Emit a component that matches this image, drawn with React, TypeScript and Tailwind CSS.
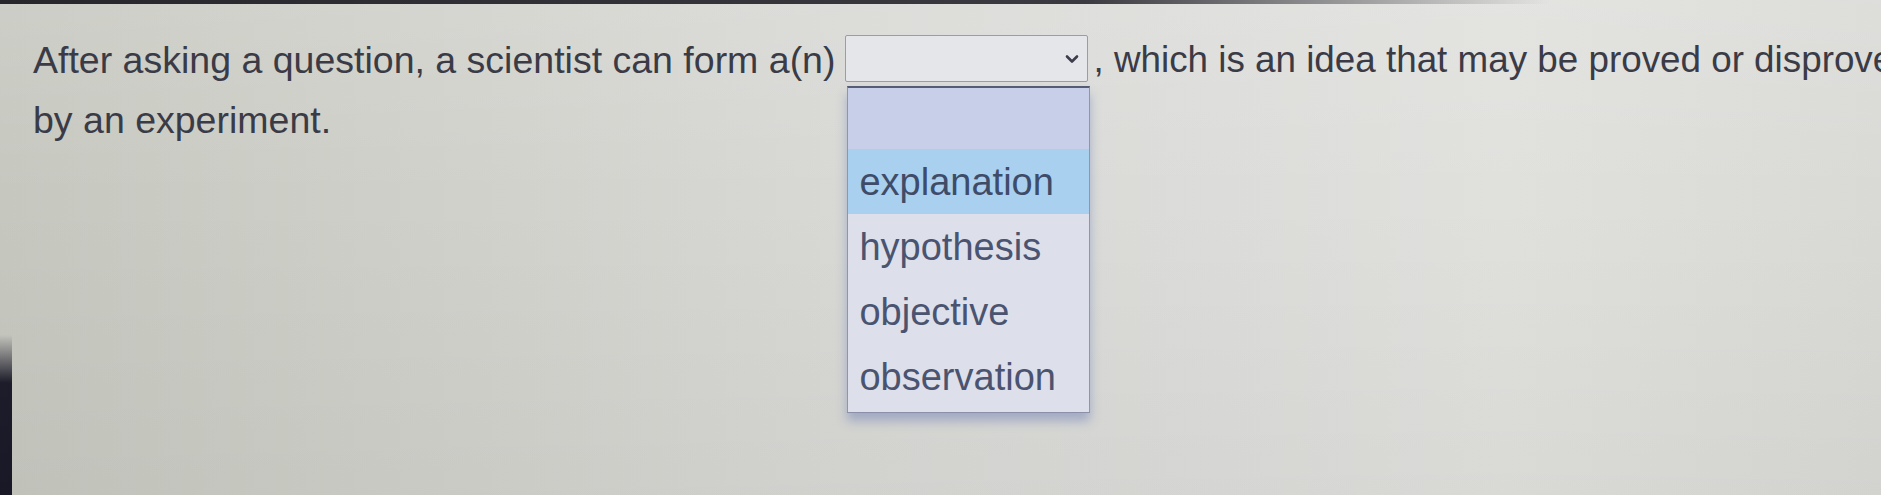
import { useState } from 'react';

const options = ['', 'explanation', 'hypothesis', 'objective', 'observation'];

function Chevron() {
    return (
        <svg width="14" height="10" viewBox="0 0 14 10" fill="none">
            <path d="M2 2.5 L7 7.5 L12 2.5" stroke="#3b3d4c" strokeWidth="2.6" strokeLinecap="round" strokeLinejoin="round" />
        </svg>
    );
}

function BlankSelect({ open, active }: { open: boolean; active: string }) {
    return (
        <div className="relative ml-[10px] mr-[5px] mt-[5px] shrink-0">
            <div className="flex h-[47px] w-[243px] items-center justify-end rounded-[2px] border border-[#9a9ca8] bg-[#e5e6ea] pr-[8px]">
                <Chevron />
            </div>

            {open && (
                <div className="absolute left-[2px] top-[51px] z-10 w-[243px] border-x border-b border-t-2 border-x-[#8d94b4] border-b-[#8a90a8] border-t-[#565c76] bg-[#dde0ea] pb-[3px] shadow-[0_8px_10px_rgba(70,90,170,0.35)]">
                    {options.map((opt) => (
                        <div
                            key={opt || 'blank'}
                            className={
                                opt === ''
                                    ? 'h-[61px] bg-[#c7cfe9]'
                                    : opt === active
                                        ? 'flex h-[65px] items-center bg-[#a9d0ef] pl-[11px] text-[38px] text-[#3f4c68]'
                                        : 'flex h-[65px] items-center pl-[11px] text-[38px] text-[#4a5470]'
                            }
                        >
                            {opt}
                        </div>
                    ))}
                </div>
            )}
        </div>
    );
}

export default function App() {
    const [open] = useState(true);

    return (
        <div className="relative h-[495px] w-full overflow-hidden bg-[linear-gradient(90deg,#c6c7bf_0%,#cecfc8_20%,#d8d9d5_45%,#dcddda_65%,#e0e0dd_80%,#d9dad6_100%)] font-['Liberation_Sans',Arial,sans-serif]">
            {/* soft light falloff toward the top */}
            <div className="pointer-events-none absolute inset-0 bg-[linear-gradient(180deg,rgba(255,255,255,0.12)_0%,rgba(255,255,255,0)_40%,rgba(0,0,0,0.03)_100%)]" />
            <div className="pointer-events-none absolute left-0 top-0 h-[4px] w-[1550px] bg-[linear-gradient(90deg,#26262c_0%,#3a3a40_70%,rgba(60,60,64,0)_100%)]" />
            <div className="pointer-events-none absolute bottom-0 left-0 h-[160px] w-[12px] bg-[linear-gradient(180deg,rgba(28,28,42,0)_0%,#1c1c2a_30%,#181826_100%)]" />

            <div className="relative w-[1900px] pl-[33px] pt-[30px] text-[37.5px] leading-[60px] text-[#3a3b46]">
                <div className="flex items-start whitespace-nowrap">
                    <span>After asking a question, a scientist can form a(n)</span>
                    <BlankSelect open={open} active="explanation" />
                    <span className="text-[36.8px]">, which is an idea that may be proved or disproved</span>
                </div>
                <div>by an experiment.</div>
            </div>
        </div>
    );
}
